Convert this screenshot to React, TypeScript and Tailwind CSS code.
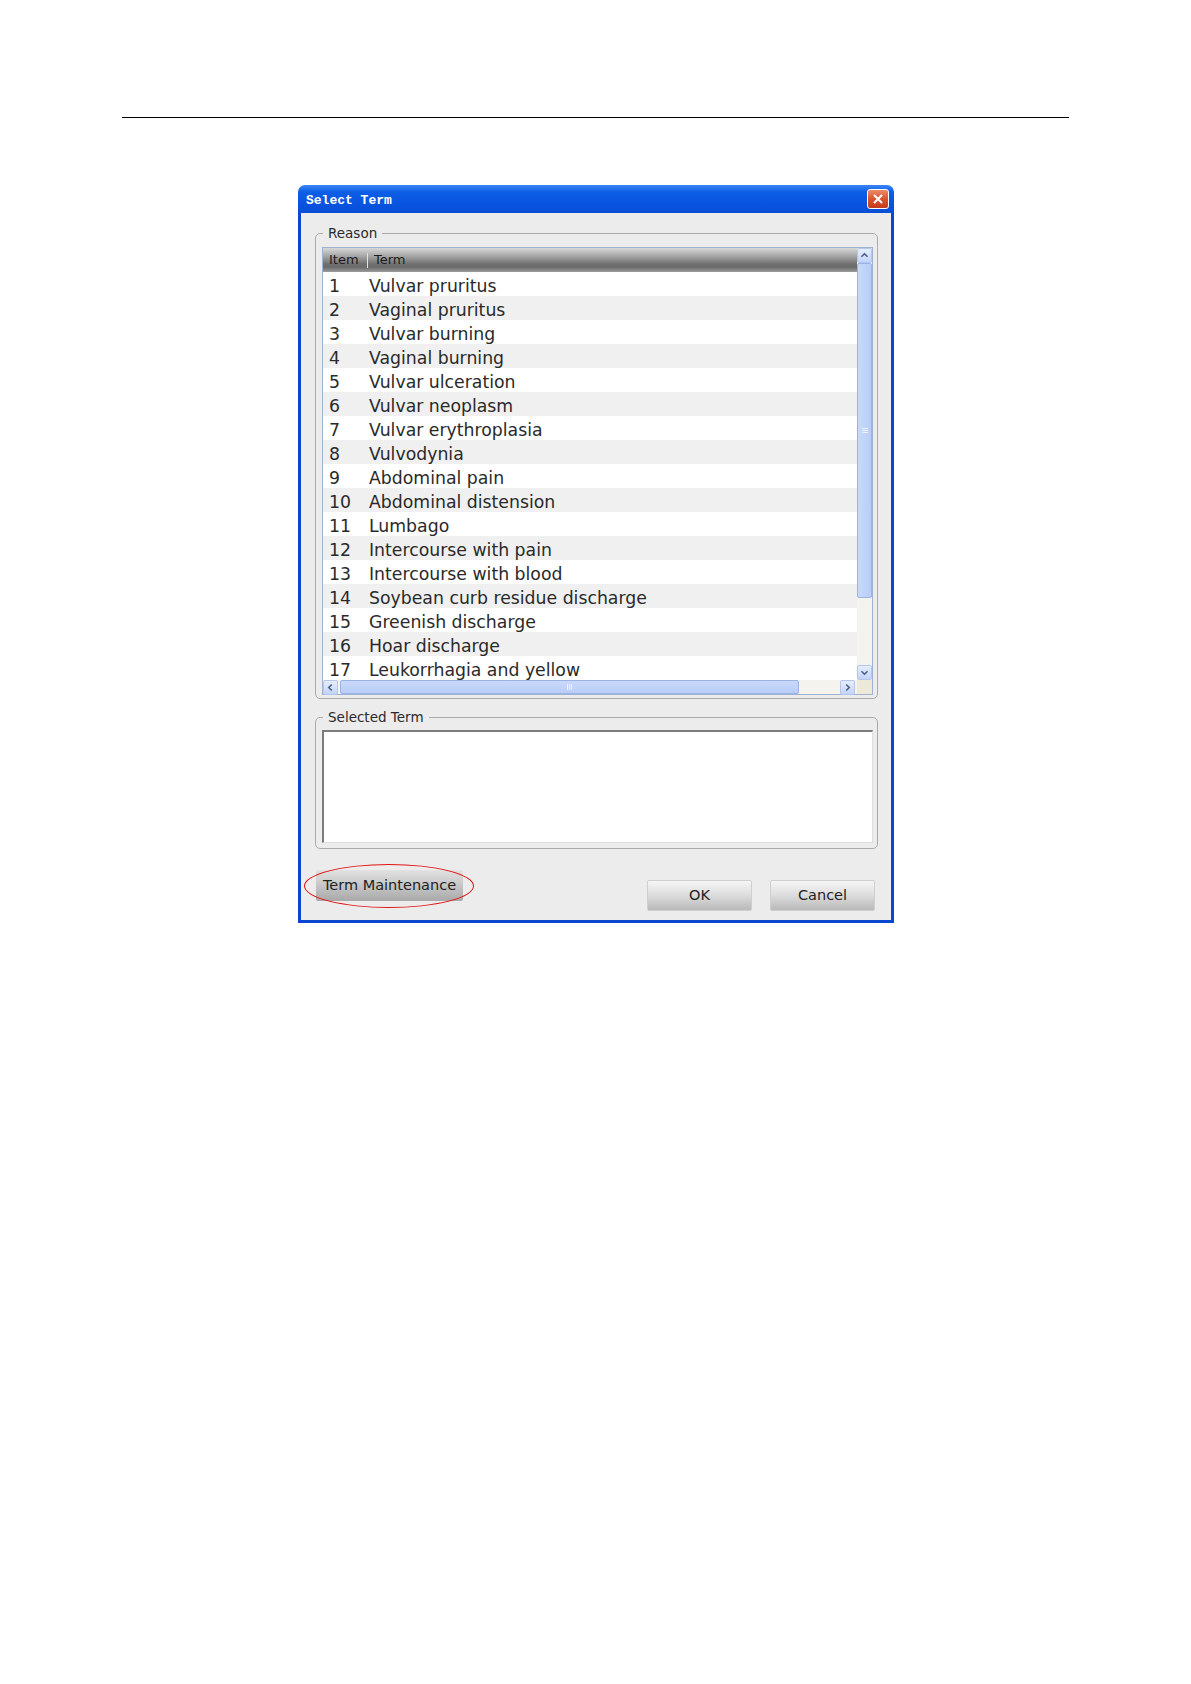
const terms = [
  "Vulvar pruritus",
  "Vaginal pruritus",
  "Vulvar burning",
  "Vaginal burning",
  "Vulvar ulceration",
  "Vulvar neoplasm",
  "Vulvar erythroplasia",
  "Vulvodynia",
  "Abdominal pain",
  "Abdominal distension",
  "Lumbago",
  "Intercourse with pain",
  "Intercourse with blood",
  "Soybean curb residue discharge",
  "Greenish discharge",
  "Hoar discharge",
  "Leukorrhagia and yellow",
];

// small XP style scrollbar arrow button
function ArrowButton({ dir }: { dir: "up" | "down" | "left" | "right" }) {
  const paths: Record<string, string> = {
    up: "M4 9 L7.5 5.5 L11 9",
    down: "M4 6 L7.5 9.5 L11 6",
    left: "M9 4 L5.5 7.5 L9 11",
    right: "M6 4 L9.5 7.5 L6 11",
  };
  return (
    <div className="w-[15px] h-[15px] rounded-[2px] border border-[#b4c6ee] bg-gradient-to-b from-[#e6eefc] to-[#c3d4f8] flex items-center justify-center">
      <svg width="15" height="15" viewBox="0 0 15 15">
        <path d={paths[dir]} fill="none" stroke="#4a5d85" strokeWidth="1.8" />
      </svg>
    </div>
  );
}

function Legend({ label }: { label: string }) {
  return (
    <legend className="ml-[1px] px-[5px] text-[13.5px] leading-[14px] text-[#2b2b2b]">{label}</legend>
  );
}

export default function App() {
  return (
    <div className="min-h-[1684px] w-[1191px] bg-white font-['DejaVu_Sans',sans-serif]">
      {/* page rule */}
      <div className="pt-[117px] pl-[122px]">
        <div className="h-px w-[947px] bg-black" />
      </div>

      {/* dialog */}
      <div className="ml-[298px] mt-[67px] w-[596px]">
        {/* title bar */}
        <div className="h-[28px] rounded-t-[7px] bg-[linear-gradient(to_bottom,#3b86f5_0%,#0d5ee6_25%,#0753df_70%,#0a4fd4_100%)] flex items-center justify-between pl-[8px] pr-[5px]">
          <span className="pt-[3px] font-['Liberation_Mono',monospace] font-bold text-[13px] text-white">
            Select Term
          </span>
          <div className="w-[22px] h-[20px] rounded-[3px] border border-white bg-gradient-to-b from-[#eb8a6a] via-[#d9532f] to-[#c23d1c] flex items-center justify-center">
            <svg width="12" height="12" viewBox="0 0 12 12">
              <path d="M2 2 L10 10 M10 2 L2 10" stroke="white" strokeWidth="2" />
            </svg>
          </div>
        </div>

        {/* body */}
        <div className="bg-[#ececec] border-x-[3px] border-b-[3px] border-[#0b46d0] pt-[13px]">
          {/* Reason */}
          <fieldset className="ml-[14px] mr-[13px] border border-[#ababab] rounded-[5px] pl-[6px] pr-[4px] pt-[7px] pb-[3px]">
            <Legend label="Reason" />
            <div className="border border-[#9fb2cf] bg-white grid grid-cols-[534px_15px] grid-rows-[432px_14px]">
              {/* table */}
              <div className="overflow-hidden">
                <div className="h-[24px] flex items-center bg-[linear-gradient(to_bottom,#d8d8d8_0%,#a4a4a4_35%,#727272_65%,#6a6a6a_80%,#9c9c9c_100%)] text-[13px] text-[#1c1c1c]">
                  <span className="pl-[6px] w-[44px]">Item</span>
                  <div className="w-px h-[15px] bg-[#e2e2e2]" />
                  <span className="pl-[6px]">Term</span>
                </div>
                {terms.map((t, i) => (
                  <div
                    key={t}
                    className={`h-[24px] flex pt-[4px] leading-[20px] text-[17.3px] text-[#2a2a2a] ${i % 2 === 0 ? "bg-white" : "bg-[#f0f0f0]"}`}
                  >
                    <span className="pl-[6px] w-[46px]">{i + 1}</span>
                    <span className="whitespace-nowrap">{t}</span>
                  </div>
                ))}
              </div>

              {/* vertical scrollbar */}
              <div className="bg-[#f4f3ee] flex flex-col">
                <ArrowButton dir="up" />
                <div className="h-[335px] rounded-[2px] border border-[#9ab3e8] bg-gradient-to-r from-[#c9d9fb] to-[#b9cdf7] flex items-center justify-center">
                  <div className="flex flex-col gap-[1px]">
                    <div className="w-[6px] h-px bg-[#eef3fe]" />
                    <div className="w-[6px] h-px bg-[#eef3fe]" />
                    <div className="w-[6px] h-px bg-[#eef3fe]" />
                  </div>
                </div>
                <div className="flex-1" />
                <ArrowButton dir="down" />
              </div>

              {/* horizontal scrollbar */}
              <div className="bg-[#f4f3ee] flex items-start">
                <ArrowButton dir="left" />
                <div className="ml-[2px] w-[459px] h-[14px] rounded-[2px] border border-[#9ab3e8] bg-gradient-to-b from-[#c9d9fb] to-[#b9cdf7] flex items-center justify-center">
                  <div className="flex gap-[1px]">
                    <div className="w-px h-[6px] bg-[#eef3fe]" />
                    <div className="w-px h-[6px] bg-[#eef3fe]" />
                    <div className="w-px h-[6px] bg-[#eef3fe]" />
                  </div>
                </div>
                <div className="flex-1" />
                <ArrowButton dir="right" />
                <div className="w-[2px]" />
              </div>
              <div className="bg-[#ece9d8]" />
            </div>
          </fieldset>

          {/* Selected Term */}
          <fieldset className="mt-[11px] ml-[14px] mr-[13px] border border-[#ababab] rounded-[5px] pl-[6px] pr-[4px] pt-[6px] pb-[5px]">
            <Legend label="Selected Term" />
            <div className="h-[113px] bg-white border-t-2 border-l-2 border-b border-r border-t-[#7c7c7c] border-l-[#7c7c7c] border-b-[#dedede] border-r-[#dedede]" />
          </fieldset>

          {/* footer */}
          <div className="flex justify-between items-start pt-[21px] pl-[15px] pr-[16px] pb-[9px] text-[14.5px] text-[#222]">
            <div className="relative">
              <button className="w-[147px] h-[31px] rounded-[2px] bg-gradient-to-b from-[#e2e2e2] via-[#c6c6c6] to-[#a9a9a9] font-['DejaVu_Sans',sans-serif]">
                Term Maintenance
              </button>
              {/* red annotation ring */}
              <div className="absolute -left-[12px] -top-[6px] w-[170px] h-[44px] rounded-[50%] border-[1.5px] border-[#e21414] pointer-events-none" />
            </div>
            <div className="mt-[10px] flex gap-[18px]">
              <button className="w-[105px] h-[31px] rounded-[2px] border border-[#cfcfcf] bg-gradient-to-b from-[#f6f6f6] via-[#dcdcdc] to-[#b9b9b9] font-['DejaVu_Sans',sans-serif]">
                OK
              </button>
              <button className="w-[105px] h-[31px] rounded-[2px] border border-[#cfcfcf] bg-gradient-to-b from-[#f6f6f6] via-[#dcdcdc] to-[#b9b9b9] font-['DejaVu_Sans',sans-serif]">
                Cancel
              </button>
            </div>
          </div>
        </div>
      </div>
    </div>
  );
}
